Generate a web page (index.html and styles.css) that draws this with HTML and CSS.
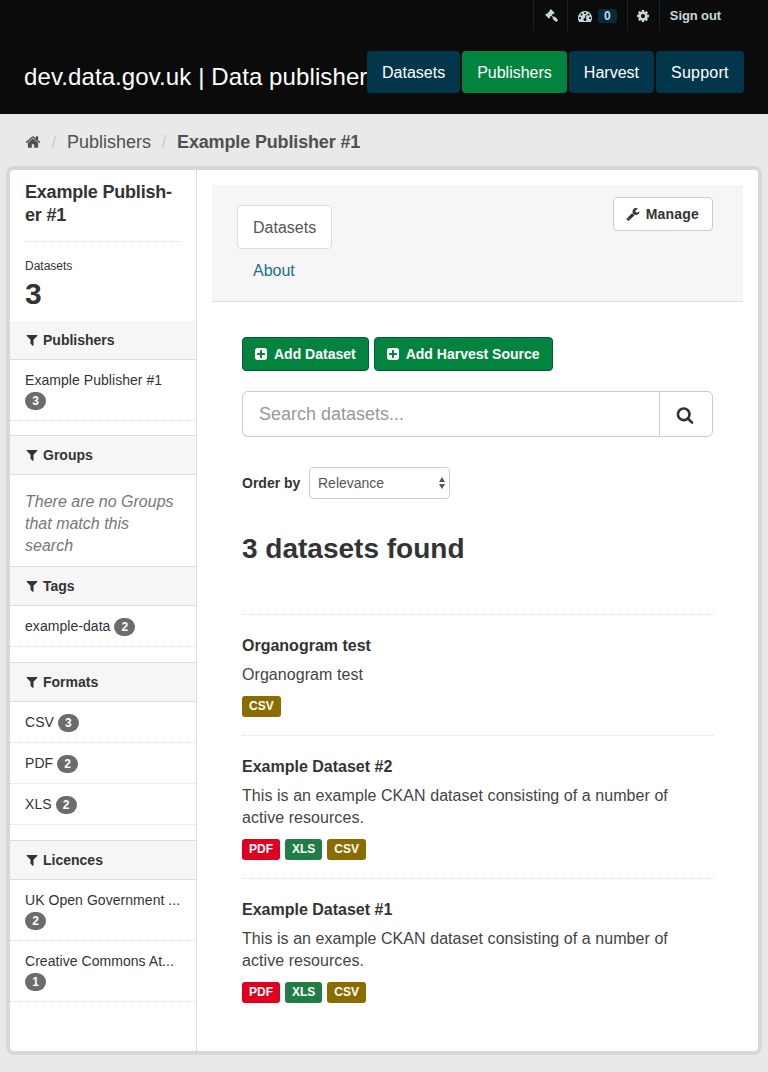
FILE: index.html
```html
<!DOCTYPE html>
<html lang="en">
<head>
<meta charset="utf-8">
<title>Example Publisher #1</title>
<link rel="stylesheet" href="styles.css">
</head>
<body>
<svg class="sprite" xmlns="http://www.w3.org/2000/svg">
  <symbol id="i-search" viewBox="0 0 1792 1792"><path d="M1216 832q0-185-131.500-316.500t-316.500-131.500-316.500 131.500-131.500 316.500 131.500 316.500 316.500 131.500 316.500-131.500 131.500-316.500zm512 832q0 52-38 90t-90 38q-54 0-90-38l-343-342q-179 124-399 124-143 0-273.500-55.500t-225-150-150-225-55.500-273.500 55.500-273.500 150-225 225-150 273.500-55.500 273.500 55.500 225 150 150 225 55.500 273.500q0 220-124 399l343 343q37 37 37 90z"/></symbol>
  <symbol id="i-filter" viewBox="0 0 1792 1792"><path d="M1595 295q17 41-14 70l-493 493v742q0 42-39 59-13 5-25 5-27 0-45-19l-256-256q-19-19-19-45v-486l-493-493q-31-29-14-70 17-39 59-39h1280q42 0 59 39z"/></symbol>
  <symbol id="i-plus" viewBox="0 0 1792 1792"><path d="M1408 960v-128q0-26-19-45t-45-19h-320v-320q0-26-19-45t-45-19h-128q-26 0-45 19t-19 45v320h-320q-26 0-45 19t-19 45v128q0 26 19 45t45 19h320v320q0 26 19 45t45 19h128q26 0 45-19t19-45v-320h320q26 0 45-19t19-45zm256-544v960q0 119-84.500 203.500t-203.500 84.500h-960q-119 0-203.500-84.500t-84.500-203.500v-960q0-119 84.500-203.500t203.500-84.500h960q119 0 203.500 84.500t84.500 203.500z"/></symbol>
  <symbol id="i-home" viewBox="0 0 1792 1792"><path d="M1472 992v480q0 26-19 45t-45 19h-384v-384h-256v384h-384q-26 0-45-19t-19-45v-480q0-1 .5-3t.5-3l575-474 575 474q1 2 1 6zm223-69l-62 74q-8 9-21 11h-3q-13 0-21-7l-692-577-692 577q-12 8-24 7-13-2-21-11l-62-74q-8-10-7-23.500t11-21.500l719-599q32-26 76-26t76 26l244 204v-195q0-14 9-23t23-9h192q14 0 23 9t9 23v408l219 182q10 8 11 21.500t-7 23.500z"/></symbol>
  <symbol id="i-cog" viewBox="0 0 1792 1792"><path d="M1152 896q0-106-75-181t-181-75-181 75-75 181 75 181 181 75 181-75 75-181zm512-109v222q0 12-8 23t-20 13l-185 28q-19 54-39 91 35 50 107 138 10 12 10 25t-9 23q-27 37-99 108t-94 71q-12 0-26-9l-138-108q-44 23-91 38-16 136-29 186-7 28-36 28h-222q-14 0-24.500-8.500t-11.500-21.500l-28-184q-49-16-90-37l-141 107q-10 9-25 9-14 0-25-11-126-114-165-168-7-10-7-23 0-12 8-23 15-21 51-66.500t54-70.500q-27-50-41-99l-183-27q-13-2-21-12.500t-8-23.500v-222q0-12 8-23t19-13l186-28q14-46 39-92-40-57-107-138-10-12-10-24 0-10 9-23 26-36 98.500-107.500t94.500-71.500q13 0 26 10l138 107q44-23 91-38 16-136 29-186 7-28 36-28h222q14 0 24.500 8.500t11.500 21.500l28 184q49 16 90 37l142-107q9-9 24-9 13 0 25 10 129 119 165 170 7 8 7 22 0 12-8 23-15 21-51 66.500t-54 70.500q26 50 41 98l183 28q13 2 21 12.500t8 23.500z"/></symbol>
  <symbol id="i-wrench" viewBox="0 0 1792 1792"><path d="M448 1472q0-26-19-45t-45-19-45 19-19 45 19 45 45 19 45-19 19-45zm644-420l-682 682q-37 37-90 37-52 0-91-37l-106-108q-38-36-38-90 0-53 38-91l681-681q39 98 114.500 173.500t173.500 114.500zm634-435q0 39-23 106-47 134-164.500 217.500t-258.500 83.500q-185 0-316.500-131.500t-131.500-316.500 131.500-316.500 316.500-131.500q58 0 121.500 16.500t107.500 46.500q16 11 16 28t-16 28l-293 169v224l193 107q5-3 79-48.500t135.500-81 70.500-35.500q15 0 23.500 10t8.500 25z"/></symbol>
  <symbol id="i-gavel" viewBox="0 0 1792 1792"><path d="M1771 1536q0 53-37 90l-107 108q-39 37-91 37-53 0-90-37l-363-364q-38-36-38-90 0-53 43-96l-256-256-126 126q-14 14-34 14t-34-14q2 2 12.500 12t12.500 13 10 11.500 10 13.500 6 13.500 5.500 16.500 1.500 18q0 38-28 68-3 3-16.500 18t-19 20.500-18.500 16.500-22 15.500-22 9-26 4.500q-40 0-68-28l-408-408q-28-28-28-68 0-13 4.500-26t9-22 15.500-22 16.500-18.500 20.500-19 18-16.500q30-28 68-28 10 0 18 1.500t16.500 5.500 13.500 6 13.500 10 11.500 10 13 12.500 12 12.500q-14-14-14-34t14-34l348-348q14-14 34-14t34 14q-2-2-12.500-12t-12.500-13-10-11.500-10-13.500-6-13.500-5.500-16.500-1.500-18q0-38 28-68 3-3 16.500-18t19-20.500 18.500-16.500 22-15.500 22-9 26-4.500q40 0 68 28l408 408q28 28 28 68 0 13-4.500 26t-9 22-15.500 22-16.500 18.500-20.500 19-18 16.500q-30 28-68 28-10 0-18-1.500t-16.500-5.500-13.500-6-13.500-10-11.500-10-13-12.500-12-12.500q14 14 14 34t-14 34l-126 126 256 256q43-43 96-43 52 0 91 37l363 363q37 39 37 91z"/></symbol>
  <symbol id="i-dash" viewBox="0 0 1792 1792"><path d="M384 1152q0-53-37.500-90.500t-90.500-37.500-90.500 37.500-37.500 90.500 37.500 90.500 90.500 37.500 90.500-37.500 37.500-90.500zm192-448q0-53-37.500-90.500t-90.500-37.500-90.500 37.500-37.500 90.500 37.500 90.500 90.500 37.500 90.500-37.500 37.500-90.500zm428 481l101-382q6-26-7.500-48.500t-38.500-29.500-48 6.500-30 39.500l-101 382q-60 5-107 43.500t-63 98.500q-20 77 20 146t117 89 146-20 89-117q16-60-6-117t-72-91zm660-33q0-53-37.500-90.500t-90.500-37.500-90.500 37.500-37.500 90.500 37.500 90.500 90.500 37.500 90.500-37.500 37.500-90.500zm-640-640q0-53-37.500-90.500t-90.500-37.500-90.500 37.500-37.500 90.500 37.500 90.500 90.500 37.500 90.500-37.500 37.500-90.500zm448 192q0-53-37.500-90.500t-90.500-37.500-90.500 37.500-37.500 90.500 37.500 90.500 90.500 37.500 90.500-37.500 37.500-90.500zm320 448q0 261-141 483-19 29-54 29h-1402q-35 0-54-29-141-221-141-483 0-182 71-348t191-286 286-191 348-71 348 71 286 191 191 286 71 348z"/></symbol>
</svg>

<header class="masthead">
  <div class="account">
    <a class="acc-item acc-gavel"><svg class="acc-icon"><use href="#i-gavel"/></svg></a>
    <a class="acc-item acc-dashboard"><svg class="acc-icon"><use href="#i-dash"/></svg><span class="acc-badge">0</span></a>
    <a class="acc-item acc-settings"><svg class="acc-icon"><use href="#i-cog"/></svg></a>
    <a class="acc-item acc-signout">Sign out</a>
  </div>
  <div class="brandbar">
    <div class="brand">dev.data.gov.uk | Data publisher</div>
    <nav class="mainnav">
      <a class="nav-btn">Datasets</a>
      <a class="nav-btn nav-active">Publishers</a>
      <a class="nav-btn">Harvest</a>
      <a class="nav-btn">Support</a>
    </nav>
  </div>
</header>

<div class="toolbar-crumbs">
  <svg class="crumb-home"><use href="#i-home"/></svg>
  <span class="crumb-sep">/</span>
  <a class="crumb">Publishers</a>
  <span class="crumb-sep">/</span>
  <strong class="crumb-current">Example Publisher #1</strong>
</div>

<div class="wrapper">
  <aside class="sidebar">
    <div class="org">
      <h1 class="org-name">Example Publish&shy;er #1</h1>
      <div class="org-stat">
        <div class="stat-label">Datasets</div>
        <div class="stat-value">3</div>
      </div>
    </div>

    <section class="facet facet-publishers">
      <h2 class="facet-head"><svg class="facet-icon"><use href="#i-filter"/></svg>Publishers</h2>
      <ul class="facet-list">
        <li class="facet-item"><a>Example Publisher #1</a> <span class="count">3</span></li>
      </ul>
    </section>
    <section class="facet facet-empty">
      <h2 class="facet-head"><svg class="facet-icon"><use href="#i-filter"/></svg>Groups</h2>
      <p class="facet-none">There are no Groups that match this search</p>
    </section>
    <section class="facet">
      <h2 class="facet-head"><svg class="facet-icon"><use href="#i-filter"/></svg>Tags</h2>
      <ul class="facet-list">
        <li class="facet-item"><a>example-data</a> <span class="count">2</span></li>
      </ul>
    </section>
    <section class="facet">
      <h2 class="facet-head"><svg class="facet-icon"><use href="#i-filter"/></svg>Formats</h2>
      <ul class="facet-list">
        <li class="facet-item"><a>CSV</a> <span class="count">3</span></li>
        <li class="facet-item"><a>PDF</a> <span class="count">2</span></li>
        <li class="facet-item"><a>XLS</a> <span class="count">2</span></li>
      </ul>
    </section>
    <section class="facet">
      <h2 class="facet-head"><svg class="facet-icon"><use href="#i-filter"/></svg>Licences</h2>
      <ul class="facet-list">
        <li class="facet-item"><a>UK Open Government ...</a> <span class="count">2</span></li>
        <li class="facet-item"><a>Creative Commons At...</a> <span class="count">1</span></li>
      </ul>
    </section>
  </aside>

  <main class="main">
    <div class="page-head">
      <div class="tabs">
        <a class="tab tab-active">Datasets</a>
        <a class="tab">About</a>
      </div>
      <a class="manage"><svg class="manage-icon"><use href="#i-wrench"/></svg>Manage</a>
    </div>

    <div class="content">
      <div class="actions">
        <a class="btn-add"><svg class="add-icon"><use href="#i-plus"/></svg>Add Dataset</a>
        <a class="btn-add"><svg class="add-icon"><use href="#i-plus"/></svg>Add Harvest Source</a>
      </div>

      <form class="search">
        <input class="search-input" type="text" placeholder="Search datasets...">
        <button class="search-btn" type="button"><svg class="search-icon"><use href="#i-search"/></svg></button>
      </form>

      <div class="order">
        <label class="order-label" for="order-by">Order by</label>
        <div class="select-wrap">
          <select class="order-select" id="order-by"><option>Relevance</option></select>
        </div>
      </div>

      <h2 class="results-title">3 datasets found</h2>

      <ul class="datasets">
        <li class="dataset">
          <h3 class="dataset-title">Organogram test</h3>
          <p class="dataset-desc">Organogram test</p>
          <div class="formats"><span class="fmt fmt-csv">CSV</span></div>
        </li>
        <li class="dataset">
          <h3 class="dataset-title">Example Dataset #2</h3>
          <p class="dataset-desc">This is an example CKAN dataset consisting of a number of active resources.</p>
          <div class="formats"><span class="fmt fmt-pdf">PDF</span><span class="fmt fmt-xls">XLS</span><span class="fmt fmt-csv">CSV</span></div>
        </li>
        <li class="dataset">
          <h3 class="dataset-title">Example Dataset #1</h3>
          <p class="dataset-desc">This is an example CKAN dataset consisting of a number of active resources.</p>
          <div class="formats"><span class="fmt fmt-pdf">PDF</span><span class="fmt fmt-xls">XLS</span><span class="fmt fmt-csv">CSV</span></div>
        </li>
      </ul>
    </div>
  </main>
</div>
</body>
</html>
```

FILE: styles.css
```css
* { box-sizing: border-box; }
html, body { margin: 0; padding: 0; }
body {
  width: 768px;
  height: 1072px;
  overflow: hidden;
  background: #e9e9e9;
  color: #444;
  font-family: "Liberation Sans", Arial, sans-serif;
  font-size: 14px;
  line-height: 20px;
}
.sprite { display: none; }
svg { fill: currentColor; display: block; }
ul { list-style: none; margin: 0; padding: 0; }
h1, h2, h3, p { margin: 0; }

.masthead { height: 114px; background: #0b0b0b; color: #fff; }
.account { display: flex; justify-content: flex-end; height: 31px; padding-right: 47px; }
.acc-item {
  display: flex;
  align-items: center;
  height: 31px;
  border-left: 1px solid #0e262f;
  color: #c6d7db;
  font-size: 13px;
  font-weight: bold;
}
.acc-gavel { padding: 0 9px 0 11px; }
.acc-gavel .acc-icon { width: 13px; height: 13px; }
.acc-dashboard { padding: 0 10px; }
.acc-settings { padding: 0 9px 0 8px; }
.acc-signout { padding: 0 0 0 10px; letter-spacing: -.1px; }
.acc-icon { width: 14px; height: 14px; }
.acc-badge {
  margin-left: 6px;
  width: 19px;
  height: 14px;
  border-radius: 3px;
  background: #052c3c;
  color: #c6d7db;
  font-size: 12px;
  line-height: 15px;
  text-align: center;
}

.brandbar { display: flex; align-items: flex-start; padding: 20px 24px 0; }
.brand { width: 343px; margin-top: 11px; font-size: 24px; line-height: 30px; letter-spacing: .1px; white-space: nowrap; }
.mainnav { display: flex; gap: 2px; }
.nav-btn {
  height: 42px;
  padding: 0 15px;
  border-radius: 4px;
  background: #02364a;
  color: #fff;
  font-size: 16px;
  line-height: 44px;
}
.nav-btn:last-child { letter-spacing: .25px; }
.nav-active { background: #03843e; }

.toolbar-crumbs {
  display: flex;
  align-items: center;
  height: 56px;
  padding: 0 0 1px 25px;
  font-size: 18px;
  color: #505050;
}
.crumb-home { width: 16px; height: 16px; color: #505050; }
.crumb-sep { width: 26px; text-align: center; color: #ccc; }
.crumb-current { font-weight: bold; letter-spacing: -.15px; }

.wrapper {
  display: flex;
  width: 748px;
  height: 881px;
  margin-left: 10px;
  background: #fff;
  border-radius: 4px;
  box-shadow: 0 0 0 4px rgba(0, 0, 0, .07);
  overflow: hidden;
}

.sidebar { flex: none; width: 187px; border-right: 1px solid #ddd; color: #333; }
.org { height: 151px; padding: 11px 15px 0; }
.org-name {
  padding-bottom: 14px;
  border-bottom: 1px dotted #ddd;
  font-size: 18px;
  line-height: 23px;
  letter-spacing: -.2px;
  color: #333;
}
.org-stat { padding-top: 14px; }
.stat-label { font-size: 12px; line-height: 20px; }
.stat-value { font-size: 30px; font-weight: bold; line-height: 36px; }

.facet { margin-bottom: 15px; }
.facet-publishers { margin-bottom: 14px; }
.facet-empty { margin-bottom: 0; }
.facet-head {
  display: flex;
  align-items: center;
  height: 40px;
  padding-left: 15px;
  background: #f6f6f6;
  border-top: 1px solid #ddd;
  border-bottom: 1px solid #ddd;
  font-size: 14px;
  line-height: 20px;
  color: #333;
}
.facet-publishers .facet-head { height: 39px; border-top: 0; }
.facet-icon { width: 14px; height: 14px; margin-right: 4px; }
.facet-item {
  padding: 10px 10px 10px 15px;
  border-bottom: 1px dotted #ddd;
  font-size: 14px;
  line-height: 20px;
  letter-spacing: .05px;
}
.count {
  display: inline-block;
  min-width: 21px;
  height: 18px;
  margin-top: 2px;
  padding: 0 6px;
  border-radius: 10px;
  background: #6c6c6c;
  color: #fff;
  font-size: 12px;
  font-weight: bold;
  line-height: 18px;
  text-align: center;
  vertical-align: top;
}
.facet-none {
  padding: 16px 15px 9px;
  font-size: 16px;
  font-style: italic;
  line-height: 22px;
  color: #777;
}

.main { flex: 1; min-width: 0; padding: 15px 15px 0; }
.page-head {
  position: relative;
  height: 117px;
  padding: 20px 25px 0;
  background: #f6f6f6;
  border-bottom: 1px solid #ddd;
}
.tabs { display: flex; flex-direction: column; align-items: flex-start; }
.tab {
  display: block;
  height: 44px;
  padding: 0 15px;
  border: 1px solid transparent;
  border-radius: 4px;
  font-size: 16px;
  line-height: 41px;
  color: #1c6f8a;
}
.tab-active { background: #fff; border-color: #ddd; color: #555; line-height: 43px; }
.manage {
  position: absolute;
  top: 12px;
  right: 30px;
  display: flex;
  align-items: center;
  height: 34px;
  padding: 0 13px 0 12px;
  background: #fff;
  border: 1px solid #ccc;
  border-radius: 4px;
  color: #333;
  font-size: 14px;
  font-weight: bold;
  letter-spacing: .2px;
}
.manage-icon { width: 14px; height: 14px; margin-right: 6px; }

.content { padding: 35px 30px 0; color: #333; }
.actions { display: flex; gap: 5px; }
.btn-add {
  display: flex;
  align-items: center;
  height: 34px;
  padding: 0 12px 0 11px;
  background: #03843e;
  border: 1px solid #025a45;
  border-radius: 4px;
  color: #fff;
  font-size: 14px;
  font-weight: bold;
}
.add-icon { width: 14px; height: 14px; margin-right: 6px; }

.search { display: flex; height: 46px; margin-top: 20px; }
.search-input {
  flex: 1;
  min-width: 0;
  height: 46px;
  padding: 0 16px;
  border: 1px solid #ccc;
  border-right: 0;
  border-radius: 6px 0 0 6px;
  background: #fff;
  font-family: inherit;
  font-size: 18px;
  color: #555;
  outline: 0;
}
.search-input::placeholder { color: #999; opacity: 1; }
.search-btn {
  flex: none;
  display: flex;
  align-items: center;
  justify-content: center;
  width: 54px;
  height: 46px;
  padding: 1px 3px 0 0;
  background: #fff;
  border: 1px solid #ccc;
  border-radius: 0 6px 6px 0;
  color: #333;
}
.search-icon { width: 18px; height: 18px; }

.order { display: flex; align-items: center; height: 32px; margin-top: 30px; }
.order-label { width: 67px; font-size: 14px; font-weight: bold; }
.select-wrap { position: relative; width: 141px; height: 32px; }
.select-wrap::before, .select-wrap::after {
  content: "";
  position: absolute;
  right: 5px;
  width: 0;
  height: 0;
  border-left: 3.5px solid transparent;
  border-right: 3.5px solid transparent;
  pointer-events: none;
}
.select-wrap::before { top: 10px; border-bottom: 5px solid #555; }
.select-wrap::after { top: 17px; border-top: 5px solid #555; }
.order-select {
  appearance: none;
  width: 100%;
  height: 32px;
  padding: 0 8px;
  background: #fff;
  border: 1px solid #ccc;
  border-radius: 4px;
  font-family: inherit;
  font-size: 14px;
  color: #555;
}

.results-title { margin-top: 33px; font-size: 28px; line-height: 34px; font-weight: bold; color: #333; }
.datasets { margin-top: 48px; }
.dataset { padding: 20px 0 18px; border-top: 1px dotted #ddd; }
.dataset-title { font-size: 16px; line-height: 22px; font-weight: bold; color: #333; }
.dataset-desc { margin-top: 7px; font-size: 16px; line-height: 22px; letter-spacing: .06px; color: #444; }
.formats { display: flex; gap: 5px; margin-top: 10px; }
.fmt {
  height: 21px;
  padding: 0 7px;
  border-radius: 3px;
  color: #fff;
  font-size: 12px;
  font-weight: bold;
  line-height: 20px;
}
.fmt-csv { background: #8a6d00; }
.fmt-pdf { background: #e0001f; }
.fmt-xls { background: #1f7d45; }
```
